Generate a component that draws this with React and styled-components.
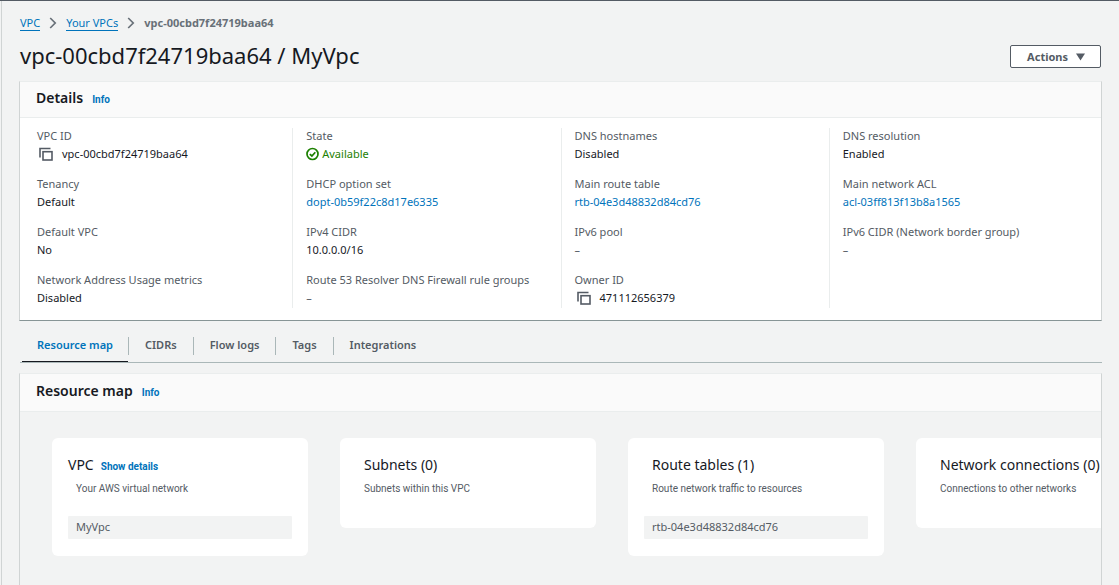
import React from "react";
import styled, { createGlobalStyle, css } from "styled-components";

const color = {
  text: "#16191f",
  muted: "#545b64",
  crumb: "#687078",
  link: "#0073bb",
  ok: "#1d8102",
  page: "#f2f3f3",
  line: "#eaeded",
  edge: "#d0d4d4",
  rule: "#aab7b8",
};

const smallFont = `Roboto, "Noto Sans", sans-serif`;

const GlobalStyle = createGlobalStyle`
  * { box-sizing: border-box; }
  html, body, #root { height: 100%; }
  body {
    margin: 0;
    background: ${color.page};
    color: ${color.text};
    font-family: "Noto Sans", "Open Sans", sans-serif;
    font-size: 11px;
    line-height: 16px;
  }
  a { color: ${color.link}; text-decoration: none; }
  h1, h2, h3, p, dl, dd, ol, ul { margin: 0; padding: 0; }
  button { font-family: inherit; cursor: pointer; }
`;

const Page = styled.div`
  display: flex;
  height: 100%;
  border-top: 1px solid ${color.muted};
  padding-left: 1px;
  overflow: hidden;
`;

const Main = styled.main`
  flex: 1;
  min-width: 0;
  display: flex;
  flex-direction: column;
  border-left: 1px solid ${color.edge};
  padding: 14px 17px 0;
`;

const Breadcrumbs = styled.ol`
  display: flex;
  align-items: center;
  gap: 9px;
  list-style: none;
  padding-left: 1px;
`;

const Crumb = styled.li`
  display: flex;
  align-items: center;
  gap: 9px;
  color: ${color.crumb};
  font-weight: ${(p) => (p.$current ? 700 : 400)};
  a { border-bottom: 1px solid ${color.link}; line-height: 15px; }
`;

const TitleRow = styled.header`
  display: flex;
  align-items: center;
  justify-content: space-between;
  padding: 1px 1px 0;
  height: 50px;
`;

const PageTitle = styled.h1`
  padding-bottom: 2px;
  font-size: 22px;
  line-height: 29px;
  font-weight: 400;
`;

const ActionsButton = styled.button`
  display: flex;
  align-items: center;
  gap: 8px;
  height: 23px;
  padding: 0 15px 0 16px;
  border: 1px solid ${color.muted};
  border-radius: 2px;
  background: #fff;
  color: ${color.muted};
  font-size: 11px;
  font-weight: 700;
`;

const Panel = styled.section`
  border: 1px solid ${color.edge};
  border-top-color: ${color.line};
  border-bottom-color: #879596;
  ${(p) =>
    p.$fill &&
    css`
      flex: 1 0 auto;
      border-bottom: 0;
    `}
`;

const PanelHeader = styled.div`
  display: flex;
  align-items: baseline;
  gap: 9px;
  padding: ${(p) => (p.$roomy ? "7px 16px 10px" : "6px 16px 9px")};
  background: #fafafa;
  border-bottom: 1px solid ${color.line};
`;

const PanelTitle = styled.h2`
  font-size: 14px;
  line-height: 20px;
  font-weight: 600;
`;

const InfoLink = styled.a`
  font-family: ${smallFont};
  font-size: 10px;
  font-weight: 700;
`;

const DetailGrid = styled.div`
  display: grid;
  grid-template-columns: repeat(4, 1fr);
  padding: 10px 4px 12px;
  background: #fff;
`;

const DetailColumn = styled.dl`
  display: flex;
  flex-direction: column;
  gap: 12px;
  padding-left: 13px;
  border-left: 1px solid ${color.line};
  &:first-child { border-left: 0; }
`;

const DetailLabel = styled.dt`
  color: ${color.muted};
  line-height: 16px;
`;

const DetailValue = styled.dd`
  display: flex;
  align-items: center;
  gap: ${(p) => (p.$status ? 2 : 7)}px;
  line-height: 20px;
  color: ${(p) => (p.$status ? color.ok : p.$empty ? color.muted : color.text)};
`;

const CopyButton = styled.button`
  display: flex;
  align-items: center;
  justify-content: center;
  width: 18px;
  height: 16px;
  padding: 0;
  border: 0;
  background: none;
`;

const TabList = styled.div`
  display: flex;
  align-items: center;
  height: 42px;
  padding-left: 2px;
  margin-left: 1px;
  border-bottom: 1px solid ${color.rule};
`;

const Tab = styled.button`
  position: relative;
  align-self: stretch;
  padding: 6px ${(p) => (p.$active ? 15 : 16)}px 0;
  border: 0;
  background: none;
  color: ${(p) => (p.$active ? color.link : color.muted)};
  font-size: 11px;
  font-weight: 600;
  ${(p) =>
    p.$active &&
    css`
      &::after {
        content: "";
        position: absolute;
        left: 0;
        right: 0;
        bottom: 0;
        height: 1px;
        background: ${color.text};
      }
    `}
`;

const TabDivider = styled.span`
  width: 1px;
  height: 18px;
  margin-top: 8px;
  background: ${color.rule};
`;

const MapArea = styled.div`
  display: flex;
  align-items: flex-start;
  gap: 32px;
  padding: 26px 32px;
  overflow: hidden;
`;

const Spacer = styled.div`
  height: 10px;
  flex: none;
`;

const Card = styled.article`
  flex: 0 0 256px;
  padding: 16px 16px 17px;
  border-radius: 6px;
  background: #fff;
`;

const CardHeading = styled.div`
  display: flex;
  align-items: baseline;
  gap: 7px;
  padding-left: ${(p) => (p.$indent ? 8 : 0)}px;
  white-space: nowrap;
`;

const CardTitle = styled.h3`
  font-size: 14px;
  line-height: 22px;
  font-weight: 400;
`;

const ShowDetails = styled.a`
  font-family: ${smallFont};
  font-size: 10px;
  font-weight: 700;
`;

const CardText = styled.p`
  padding: 5px 8px 14px;
  font-family: ${smallFont};
  font-size: 10px;
  line-height: 16px;
  color: ${color.muted};
`;

const Resource = styled.div`
  margin-top: 5px;
  padding: 3px 8px 4px;
  border-radius: 1px;
  background: ${color.page};
  color: ${color.muted};
`;

const Chevron = () => (
  <svg width="8" height="12" viewBox="0 0 8 12" fill="none" stroke="#687078" strokeWidth="1.7" aria-hidden="true">
    <path d="M1.2 1 6.2 6 1.2 11" />
  </svg>
);

const CopyIcon = () => (
  <svg width="14" height="14" viewBox="0 0 14 14" fill="none" stroke="#545b64" strokeWidth="1.6" aria-hidden="true">
    <path d="M1 10.5V1.5h10.5" />
    <rect x="4" y="4.7" width="9" height="8.3" />
  </svg>
);

const StatusIcon = () => (
  <svg width="14" height="14" viewBox="0 0 14 14" fill="none" stroke="#1d8102" strokeWidth="1.7" aria-hidden="true">
    <circle cx="6.5" cy="7" r="5.5" />
    <path d="M3.8 7.1 5.9 9 9.3 5.2" />
  </svg>
);

const columns = [
  [
    { label: "VPC ID", value: "vpc-00cbd7f24719baa64", kind: "copy" },
    { label: "Tenancy", value: "Default" },
    { label: "Default VPC", value: "No" },
    { label: "Network Address Usage metrics", value: "Disabled" },
  ],
  [
    { label: "State", value: "Available", kind: "status" },
    { label: "DHCP option set", value: "dopt-0b59f22c8d17e6335", kind: "link" },
    { label: "IPv4 CIDR", value: "10.0.0.0/16" },
    { label: "Route 53 Resolver DNS Firewall rule groups", value: "–", kind: "empty" },
  ],
  [
    { label: "DNS hostnames", value: "Disabled" },
    { label: "Main route table", value: "rtb-04e3d48832d84cd76", kind: "link" },
    { label: "IPv6 pool", value: "–", kind: "empty" },
    { label: "Owner ID", value: "471112656379", kind: "copy" },
  ],
  [
    { label: "DNS resolution", value: "Enabled" },
    { label: "Main network ACL", value: "acl-03ff813f13b8a1565", kind: "link" },
    { label: "IPv6 CIDR (Network border group)", value: "–", kind: "empty" },
  ],
];

const tabs = ["Resource map", "CIDRs", "Flow logs", "Tags", "Integrations"];

const cards = [
  { title: "VPC", details: true, text: "Your AWS virtual network", resource: "MyVpc" },
  { title: "Subnets (0)", text: "Subnets within this VPC" },
  { title: "Route tables (1)", text: "Route network traffic to resources", resource: "rtb-04e3d48832d84cd76" },
  { title: "Network connections (0)", text: "Connections to other networks" },
];

function Detail({ label, value, kind }) {
  return (
    <div>
      <DetailLabel>{label}</DetailLabel>
      <DetailValue $status={kind === "status"} $empty={kind === "empty"}>
        {kind === "copy" && (
          <CopyButton aria-label={`Copy ${label}`}>
            <CopyIcon />
          </CopyButton>
        )}
        {kind === "status" && <StatusIcon />}
        {kind === "link" ? <a href="#resource">{value}</a> : <span>{value}</span>}
      </DetailValue>
    </div>
  );
}

export default function App() {
  return (
    <>
      <GlobalStyle />
      <Page>
        <Main>
          <nav aria-label="Breadcrumbs">
            <Breadcrumbs>
              <Crumb><a href="#vpc">VPC</a><Chevron /></Crumb>
              <Crumb><a href="#vpcs">Your VPCs</a><Chevron /></Crumb>
              <Crumb $current aria-current="page">vpc-00cbd7f24719baa64</Crumb>
            </Breadcrumbs>
          </nav>
          <TitleRow>
            <PageTitle>vpc-00cbd7f24719baa64 / MyVpc</PageTitle>
            <ActionsButton>
              Actions
              <svg width="9" height="8" viewBox="0 0 9 8" fill="#545b64" aria-hidden="true">
                <path d="M0 .5h9L4.5 7.5z" />
              </svg>
            </ActionsButton>
          </TitleRow>
          <Panel>
            <PanelHeader>
              <PanelTitle>Details</PanelTitle>
              <InfoLink href="#details-info">Info</InfoLink>
            </PanelHeader>
            <DetailGrid>
              {columns.map((items) => (
                <DetailColumn key={items[0].label}>
                  {items.map((item) => <Detail key={item.label} {...item} />)}
                </DetailColumn>
              ))}
            </DetailGrid>
          </Panel>
          <TabList role="tablist">
            {tabs.map((name, i) => (
              <React.Fragment key={name}>
                {i > 0 && <TabDivider />}
                <Tab role="tab" aria-selected={i === 0} $active={i === 0}>{name}</Tab>
              </React.Fragment>
            ))}
          </TabList>
          <Spacer />
          <Panel $fill>
            <PanelHeader $roomy>
              <PanelTitle>Resource map</PanelTitle>
              <InfoLink href="#map-info">Info</InfoLink>
            </PanelHeader>
            <MapArea>
              {cards.map((card) => (
                <Card key={card.title}>
                  <CardHeading $indent={!card.details}>
                    <CardTitle>{card.title}</CardTitle>
                    {card.details && <ShowDetails href="#show">Show details</ShowDetails>}
                  </CardHeading>
                  <CardText>{card.text}</CardText>
                  {card.resource && <Resource>{card.resource}</Resource>}
                </Card>
              ))}
            </MapArea>
          </Panel>
        </Main>
      </Page>
    </>
  );
}
